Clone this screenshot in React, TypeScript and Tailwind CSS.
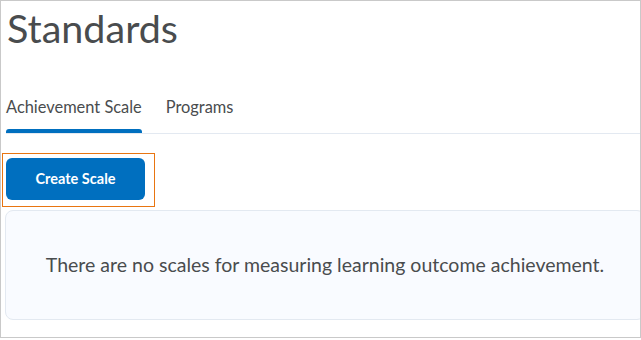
export default function App() {
  return (
    <div className="w-[641px] h-[340px] bg-white overflow-hidden" style={{ fontFamily: 'Lato, "Open Sans", sans-serif' }}>
      <div className="w-[641px] h-[338px] border border-[#c9c9c9] overflow-hidden pl-[5px] text-[#494c4e]">
        <h1 className="text-[39.5px] leading-none pt-[7px] pl-[1px] h-[94px]">Standards</h1>

        {/* tabs */}
        <div className="flex items-end gap-6 border-b border-[#e3e9f1] w-[700px]">
          <div className="relative pb-[14px]">
            <span className="text-[16.4px] leading-none">Achievement Scale</span>
            <div className="absolute left-0 right-0 bottom-0 h-[4px] bg-[#006fbf] rounded-t-[3px]" />
          </div>
          <div className="pb-[14px]">
            <span className="text-[16.4px] leading-none">Programs</span>
          </div>
        </div>

        <div className="mt-[19px] ml-[-4px] inline-block border border-[#e87511] pl-[3px] pr-[9px] pt-[4px] pb-[6px]">
          <button className="w-[139px] h-[42px] rounded-md bg-[#006fbf] text-white text-[14.5px] font-bold">
            Create Scale
          </button>
        </div>

        <div className="mt-[3px] ml-[-1px] w-[640px] h-[110px] rounded-lg border border-[#e3e9f1] bg-[#f9fbff] flex items-center justify-center">
          <p className="text-[19.5px]">There are no scales for measuring learning outcome achievement.</p>
        </div>
      </div>
    </div>
  );
}
